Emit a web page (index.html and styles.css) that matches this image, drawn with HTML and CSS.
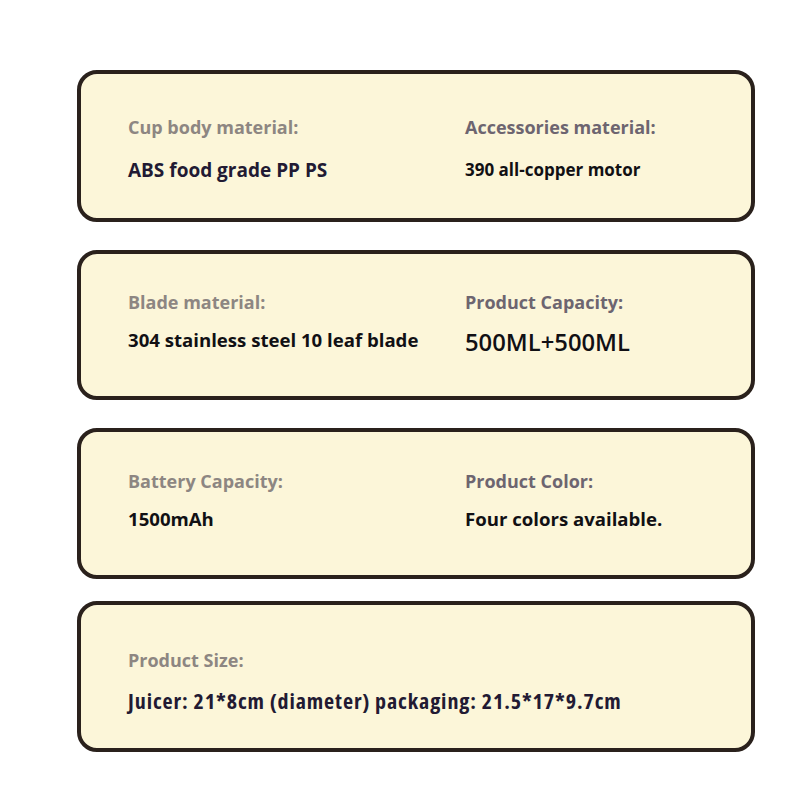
FILE: index.html
```html
<!DOCTYPE html>
<html>
<head>
<meta charset="utf-8">
<link rel="stylesheet" href="styles.css">
</head>
<body>
<main class="list">
  <section class="card card-a">
    <div class="col">
      <div class="label">Cup body material:</div>
      <div class="value value-navy">ABS food grade PP PS</div>
    </div>
    <div class="col col-right">
      <div class="label label-dark">Accessories material:</div>
      <div class="value value-small">390 all-copper motor</div>
    </div>
  </section>
  <section class="card card-b">
    <div class="col">
      <div class="label">Blade material:</div>
      <div class="value">304 stainless steel 10 leaf blade</div>
    </div>
    <div class="col col-right">
      <div class="label label-dark">Product Capacity:</div>
      <div class="value value-big">500ML+500ML</div>
    </div>
  </section>
  <section class="card card-c">
    <div class="col">
      <div class="label">Battery Capacity:</div>
      <div class="value">1500mAh</div>
    </div>
    <div class="col col-right">
      <div class="label label-dark">Product Color:</div>
      <div class="value">Four colors available.</div>
    </div>
  </section>
  <section class="card card-d">
    <div class="col">
      <div class="label">Product Size:</div>
      <div class="value value-navy value-cond">Juicer: 21*8cm (diameter) packaging: 21.5*17*9.7cm</div>
    </div>
  </section>
</main>
</body>
</html>
```

FILE: styles.css
```css
html, body {
  margin: 0;
  padding: 0;
  background: #ffffff;
}
body {
  font-family: "Open Sans", "Noto Sans", sans-serif;
  font-weight: 700;
}
.list {
  display: flex;
  flex-direction: column;
  gap: 28px;
  padding: 70px 0 0 77px;
  width: 678px;
}
.card {
  box-sizing: border-box;
  height: 152px;
  border: 4px solid #2a211c;
  border-radius: 20px;
  background: #fcf6d9;
  display: grid;
  grid-template-columns: 335px 1fr;
  align-items: start;
  padding: 41px 0 0 47px;
}
.card-a .value {
  margin-top: 18px;
}
.card-b {
  height: 150px;
  padding-top: 36px;
}
.card-c {
  height: 151px;
  padding-top: 37px;
}
.card-d {
  height: 151px;
  margin-top: -6px;
  grid-template-columns: 1fr;
  padding-top: 43px;
}
.col {
  display: flex;
  flex-direction: column;
}
.col-right {
  padding-left: 2px;
}
.label {
  font-size: 18px;
  line-height: 24px;
  color: #8d8682;
}
.label-dark {
  color: #6d6570;
}
.value {
  margin-top: 13px;
  font-size: 18.6px;
  line-height: 26px;
  color: #111014;
}
.value-navy {
  color: #221a33;
}
.card-a .value-navy {
  font-size: 19px;
}
.value-small {
  font-size: 17px;
}
.value-big {
  font-size: 23.8px;
  line-height: 30px;
  font-weight: 600;
  margin-top: 13px;
}
.card-d .value {
  font-size: 22px;
  line-height: 28px;
  font-stretch: condensed;
  letter-spacing: 0.9px;
  margin-top: 14px;
}
```
